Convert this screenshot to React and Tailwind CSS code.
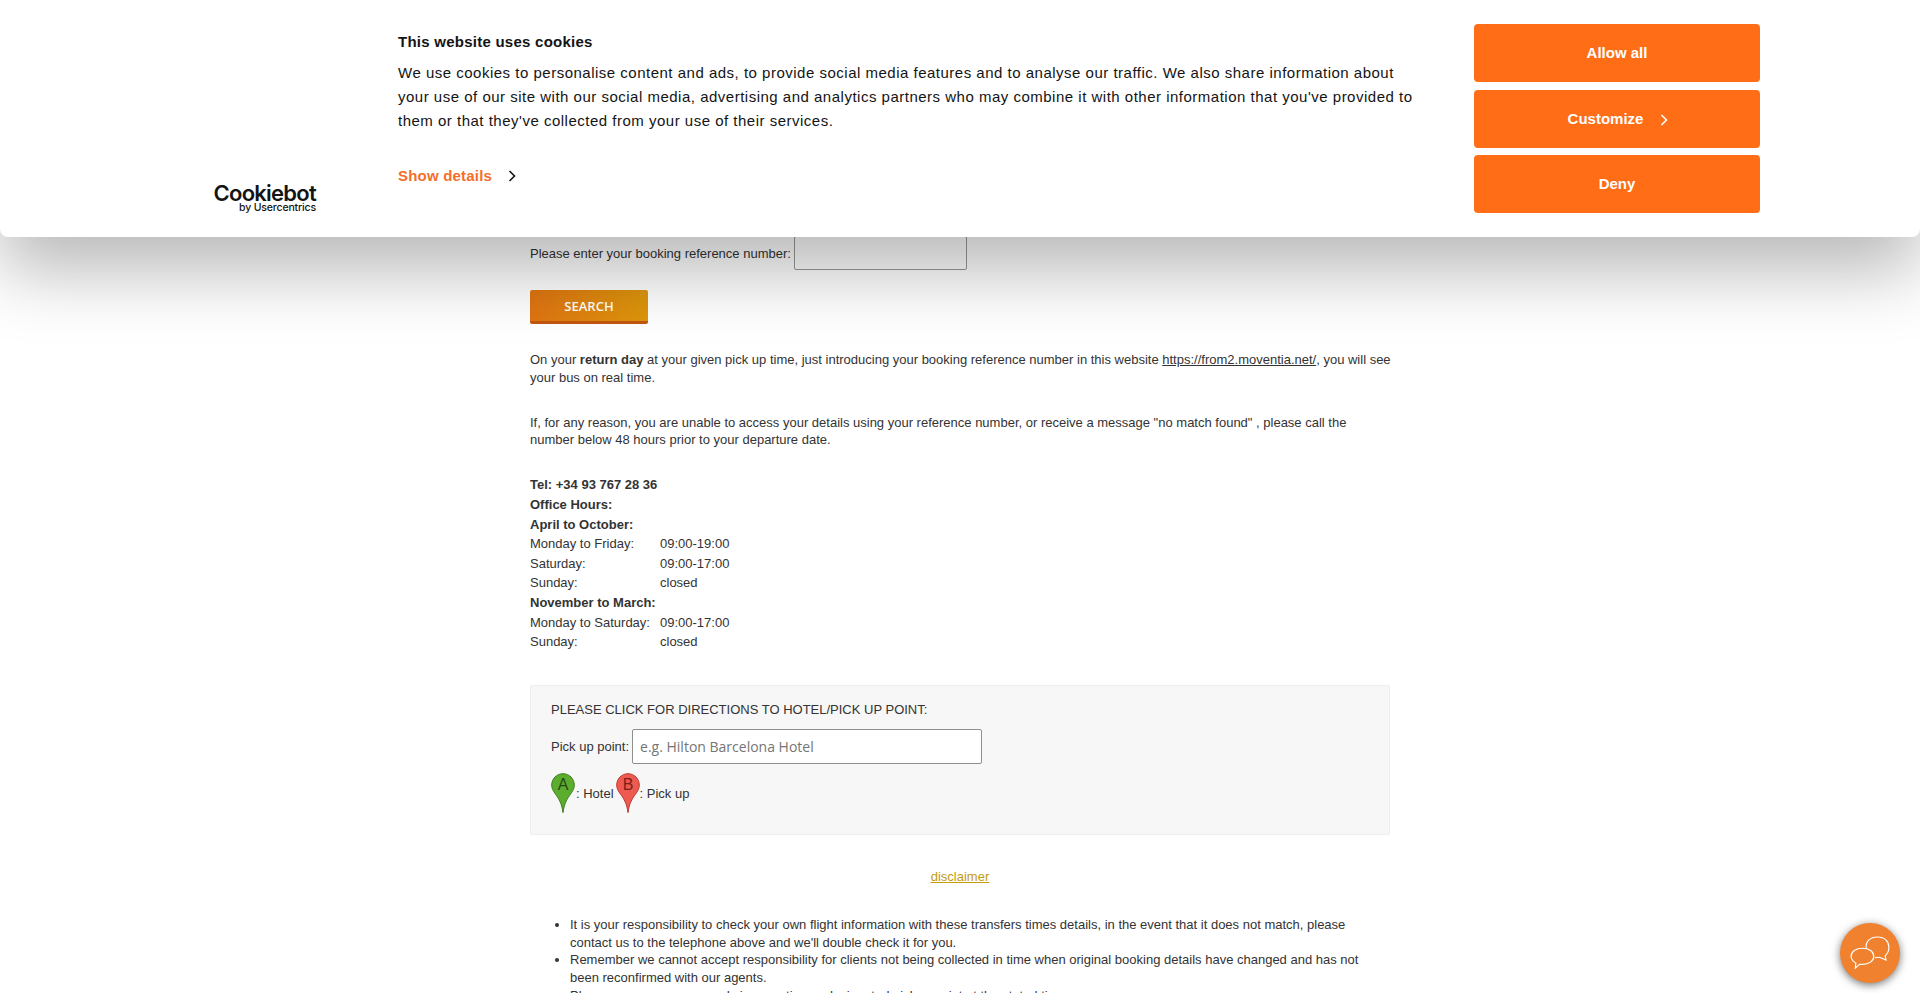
const hours = [
  { bold: "Tel: +34 93 767 28 36" },
  { bold: "Office Hours:" },
  { bold: "April to October:" },
  { day: "Monday to Friday:", time: "09:00-19:00" },
  { day: "Saturday:", time: "09:00-17:00" },
  { day: "Sunday:", time: "closed" },
  { bold: "November to March:" },
  { day: "Monday to Saturday:", time: "09:00-17:00" },
  { day: "Sunday:", time: "closed" },
];

function Pin({ letter, fill, stroke, text }) {
  return (
    <svg width="24" height="40" viewBox="0 0 24 40" className="shrink-0">
      <path
        d="M12 .7C5.6.7.7 5.8.7 12c0 3.2 1.2 5.6 3.4 8.6 3.2 4.4 6.6 9 7.9 19 1.3-10 4.700-14.600 7.900-19 2.200-3 3.400-5.400 3.400-8.600C23.300 5.800 18.400.7 12 .7z"
        fill={fill}
        stroke={stroke}
        strokeWidth="1"
      />
      <text x="12" y="17" textAnchor="middle" fontSize="16" fontFamily="Liberation Sans, sans-serif" fill={text}>
        {letter}
      </text>
    </svg>
  );
}

function CookieBanner() {
  return (
    <div className="absolute top-0 left-0 z-10 flex h-[237px] w-full rounded-b-lg bg-white font-['Liberation_Sans',sans-serif] text-[#141414] shadow-[0_34px_70px_rgba(0,0,0,0.28)]">
      <div className="flex w-[398px] shrink-0 justify-end pt-[182px] pr-[82px]">
        <div className="flex flex-col items-end leading-none text-[#141414]">
          <span className="font-['Inter',sans-serif] text-[22px] font-semibold tracking-[-0.75px]">Cookiebot</span>
          <span className="mt-[-1px] font-['Inter',sans-serif] text-[10.5px] font-medium tracking-[-0.15px]">by Usercentrics</span>
        </div>
      </div>

      <div className="w-[1014px] shrink-0 pt-[30px]">
        <h1 className="text-[15px] leading-6 font-bold tracking-[0.25px]">This website uses cookies</h1>
        <p className="mt-[7px] w-[1030px] text-[15px] leading-6 tracking-[0.5px]">
          We use cookies to personalise content and ads, to provide social media features and to analyse our traffic. We also share information about
          <br />
          your use of our site with our social media, advertising and analytics partners who may combine it with other information that you've provided to
          <br />
          them or that they've collected from your use of their services.
        </p>
        <div className="mt-[31px] flex items-center text-[15px] leading-6 font-bold tracking-[0.2px] text-[#f4702a]">
          Show details
          <svg width="8" height="12" viewBox="0 0 8 12" className="ml-[16px]" fill="none" stroke="#141414" strokeWidth="1.600">
            <path d="M1.500 1l5 5-5 5" />
          </svg>
        </div>
      </div>

      <div className="ml-[62px] flex w-[286px] flex-col pt-[24px] text-[15px] font-bold text-white">
        <button className="flex h-[58px] items-center justify-center rounded-[4px] bg-[#ff6d17]">Allow all</button>
        <button className="mt-[8px] flex h-[58px] items-center justify-center rounded-[4px] bg-[#ff6d17] pl-[2px]">
          Customize
          <svg width="8" height="12" viewBox="0 0 8 12" className="mt-[2px] ml-[17px]" fill="none" stroke="#fff" strokeWidth="1.600">
            <path d="M1.500 1l5 5-5 5" />
          </svg>
        </button>
        <button className="mt-[7px] flex h-[58px] items-center justify-center rounded-[4px] bg-[#ff6d17]">Deny</button>
      </div>
    </div>
  );
}

export default function App() {
  return (
    <div className="relative h-[993px] w-full overflow-hidden bg-white font-['Liberation_Sans',sans-serif] text-[13px] leading-[17.6px] text-[#333]">
      <CookieBanner />

      <main className="mx-auto w-[860px] pt-[236px]">
        <div className="flex items-center">
          <label className="relative pt-[2px]">Please enter your booking reference number:</label>
          <input className="ml-[3px] h-[34px] w-[173px] rounded-[2px] border border-[#999] bg-white" />
        </div>

        <button className="mt-[20px] block h-[34px] w-[118px] rounded-[2px] border-b-[3px] border-[#c2560f] bg-gradient-to-r from-[#df7412] to-[#dd960a] pt-[3px] font-['Open_Sans',sans-serif] text-[13px] font-semibold text-white">
          SEARCH
        </button>

        <p className="mt-[27px] mr-[-4px]">
          On your <b>return day</b> at your given pick up time, just introducing your booking reference number in this website <u>https://from2.moventia.net/</u>, you will see your bus on real time.
        </p>
        <p className="mt-[27.6px]">
          If, for any reason, you are unable to access your details using your reference number, or receive a message "no match found" , please call the number below 48 hours prior to your departure date.
        </p>

        <div className="mt-[26.4px] flex flex-col">
          {hours.map((row, i) =>
            row.bold ? (
              <b key={i} className="h-[19.6px] leading-[19.6px]">{row.bold}</b>
            ) : (
              <div key={i} className="flex h-[19.6px] leading-[19.6px]">
                <span className="w-[130px]">{row.day}</span>
                <span>{row.time}</span>
              </div>
            )
          )}
        </div>

        <section className="mt-[33px] h-[150px] rounded-[2px] border border-[#eee] bg-[#f7f7f7] px-[20px] pt-[15px]">
          <p>PLEASE CLICK FOR DIRECTIONS TO HOTEL/PICK UP POINT:</p>
          <div className="mt-[11px] flex items-center">
            <label>Pick up point:</label>
            <input
              placeholder="e.g. Hilton Barcelona Hotel"
              className="ml-[3px] h-[35px] w-[350px] rounded-[2px] border border-[#8f8f8f] bg-white px-[7px] font-['Open_Sans',sans-serif] text-[14px] placeholder:text-[#757575]"
            />
          </div>
          <div className="mt-[9px] flex items-center">
            <Pin letter="A" fill="#5cac2e" stroke="#3f7f1c" text="#234a10" />
            <span className="ml-[1px]">: Hotel</span>
            <span className="ml-[2px]"><Pin letter="B" fill="#ee5a50" stroke="#b93a32" text="#7a1f1a" /></span>
            <span>: Pick up</span>
          </div>
        </section>

        <p className="mt-[33px] text-center">
          <a className="text-[#c59a0c] underline">disclaimer</a>
        </p>

        <ul className="mt-[31px] list-disc pl-[40px] leading-[17.6px]">
          <li>It is your responsibility to check your own flight information with these transfers times details, in the event that it does not match, please contact us to the telephone above and we'll double check it for you.</li>
          <li>Remember we cannot accept responsibility for clients not being collected in time when original booking details have changed and has not been reconfirmed with our agents.</li>
          <li>Please ensure you are ready in reception or designated pickup point at the stated time.</li>
        </ul>
      </main>

      <button className="absolute top-[923px] left-[1840px] flex h-[60px] w-[60px] items-center justify-center rounded-full bg-[#f0812f] shadow-[0_2px_8px_rgba(0,0,0,0.55)]">
        <svg width="40" height="34" viewBox="0 0 42 36" fill="none" stroke="#fff" strokeWidth="1.200">
          <path d="M17 13.500C16 6 21 1 29 1c7.500 0 12 4.500 12 11 0 4.500-1.500 7-4 9l1 4.500-7-3-5 .5" />
          <path d="M13 13c7 0 12 3.500 12 8.500S20 30 13 30l-3 0-4.500 4 .5-5.500C3 27 1 24.500 1 21.500 1 16.500 6 13 13 13z" />
        </svg>
      </button>
    </div>
  );
}
